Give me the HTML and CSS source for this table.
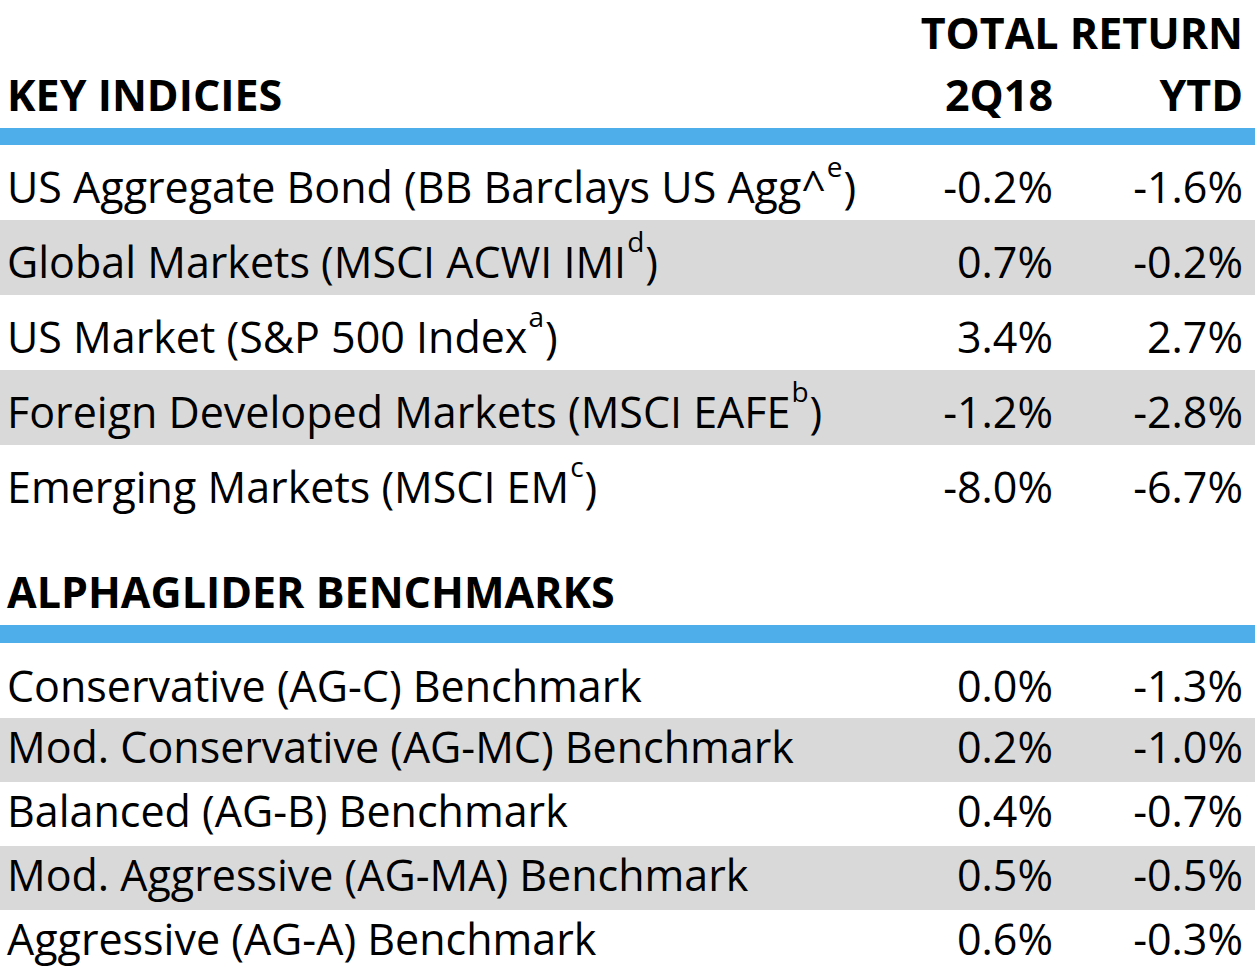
FILE: index.html
```html
<!DOCTYPE html>
<html lang="en">
<head>
<meta charset="utf-8">
<title>Key Indicies</title>
<link rel="stylesheet" href="styles.css">
</head>
<body>
<table class="returns">
  <colgroup>
    <col class="col-label">
    <col class="col-num">
    <col class="col-num">
  </colgroup>
  <thead>
    <tr class="head-top">
      <th class="label"></th>
      <th class="num" colspan="2">TOTAL RETURN</th>
    </tr>
    <tr class="head-main">
      <th class="label">KEY INDICIES</th>
      <th class="num">2Q18</th>
      <th class="num">YTD</th>
    </tr>
  </thead>
  <tbody class="sec-a">
    <tr>
      <td class="label">US Aggregate Bond (BB Barclays US Agg^<sup>e</sup>)</td>
      <td class="num">-0.2%</td>
      <td class="num">-1.6%</td>
    </tr>
    <tr class="alt">
      <td class="label">Global Markets (MSCI ACWI IMI<sup>d</sup>)</td>
      <td class="num">0.7%</td>
      <td class="num">-0.2%</td>
    </tr>
    <tr>
      <td class="label">US Market (S&amp;P 500 Index<sup>a</sup>)</td>
      <td class="num">3.4%</td>
      <td class="num">2.7%</td>
    </tr>
    <tr class="alt">
      <td class="label">Foreign Developed Markets (MSCI EAFE<sup>b</sup>)</td>
      <td class="num">-1.2%</td>
      <td class="num">-2.8%</td>
    </tr>
    <tr>
      <td class="label">Emerging Markets (MSCI EM<sup>c</sup>)</td>
      <td class="num">-8.0%</td>
      <td class="num">-6.7%</td>
    </tr>
  </tbody>
  <tbody class="sec-head">
    <tr class="head-main second">
      <th class="label" colspan="3">ALPHAGLIDER BENCHMARKS</th>
    </tr>
  </tbody>
  <tbody class="sec-b">
    <tr class="first">
      <td class="label">Conservative (AG-C) Benchmark</td>
      <td class="num">0.0%</td>
      <td class="num">-1.3%</td>
    </tr>
    <tr class="alt">
      <td class="label">Mod. Conservative (AG-MC) Benchmark</td>
      <td class="num">0.2%</td>
      <td class="num">-1.0%</td>
    </tr>
    <tr>
      <td class="label">Balanced (AG-B) Benchmark</td>
      <td class="num">0.4%</td>
      <td class="num">-0.7%</td>
    </tr>
    <tr class="alt">
      <td class="label">Mod. Aggressive (AG-MA) Benchmark</td>
      <td class="num">0.5%</td>
      <td class="num">-0.5%</td>
    </tr>
    <tr>
      <td class="label">Aggressive (AG-A) Benchmark</td>
      <td class="num">0.6%</td>
      <td class="num">-0.3%</td>
    </tr>
  </tbody>
</table>
</body>
</html>
```

FILE: styles.css
```css
html, body {
  margin: 0;
  padding: 0;
  background: #ffffff;
}

body {
  font-family: "Open Sans", "Liberation Sans", sans-serif;
  color: #000000;
}

.returns {
  width: 1255px;
  border-collapse: collapse;
  border-spacing: 0;
  table-layout: fixed;
  font-size: 43px;
  line-height: 50px;
}

.col-num {
  width: 190px;
}

.returns th,
.returns td {
  padding: 0;
  white-space: nowrap;
  vertical-align: top;
}

.returns th {
  font-weight: 700;
}

.returns .label {
  text-align: left;
  padding-left: 7px;
}

.returns .num {
  text-align: right;
  padding-right: 12px;
}

/* header rows */
.head-top th {
  padding-top: 8px;
  padding-bottom: 0;
}

.head-main th {
  padding-top: 12px;
  padding-bottom: 8px;
  border-bottom: 17px solid #4eaee9;
}

.head-main.second th {
  padding-top: 47px;
  padding-bottom: 8px;
  border-bottom-width: 18px;
}

/* section A rows */
.sec-a td {
  padding-top: 17px;
  padding-bottom: 8px;
}

/* section B rows */
.sec-b td {
  padding-top: 4px;
  padding-bottom: 10px;
}

.sec-b .first td {
  padding-top: 18px;
  padding-bottom: 7px;
}

.alt td {
  background: #d9d9d9;
}

sup {
  font-size: 28px;
  line-height: 0;
  vertical-align: 26px;
  padding: 0 1px;
}
```
